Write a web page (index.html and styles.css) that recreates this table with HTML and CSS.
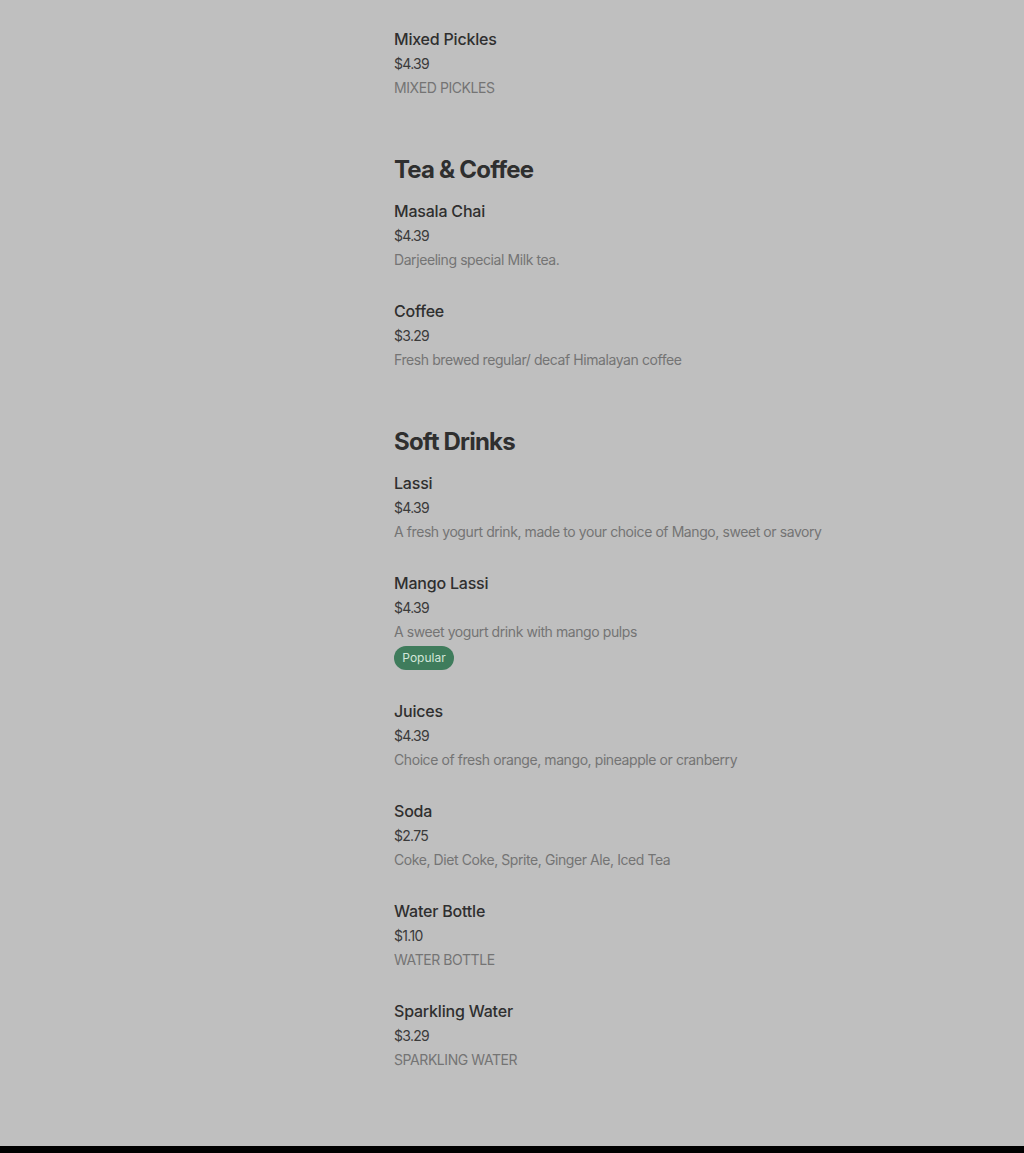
FILE: index.html
```html
<!DOCTYPE html>
<html lang="en">
<head>
<meta charset="utf-8">
<title>Menu</title>
<link rel="stylesheet" href="styles.css">
</head>
<body>
<main class="menu">
  <section class="section first">
    <div class="item">
      <div class="name">Mixed Pickles</div>
      <div class="price">$4.39</div>
      <div class="desc">MIXED PICKLES</div>
    </div>
  </section>

  <section class="section">
    <h2 class="heading">Tea &amp; Coffee</h2>
    <div class="item">
      <div class="name">Masala Chai</div>
      <div class="price">$4.39</div>
      <div class="desc">Darjeeling special Milk tea.</div>
    </div>
    <div class="item">
      <div class="name">Coffee</div>
      <div class="price">$3.29</div>
      <div class="desc">Fresh brewed regular/ decaf Himalayan coffee</div>
    </div>
  </section>

  <section class="section">
    <h2 class="heading">Soft Drinks</h2>
    <div class="item">
      <div class="name">Lassi</div>
      <div class="price">$4.39</div>
      <div class="desc">A fresh yogurt drink, made to your choice of Mango, sweet or savory</div>
    </div>
    <div class="item">
      <div class="name">Mango Lassi</div>
      <div class="price">$4.39</div>
      <div class="desc">A sweet yogurt drink with mango pulps</div>
      <span class="badge">Popular</span>
    </div>
    <div class="item">
      <div class="name">Juices</div>
      <div class="price">$4.39</div>
      <div class="desc">Choice of fresh orange, mango, pineapple or cranberry</div>
    </div>
    <div class="item">
      <div class="name">Soda</div>
      <div class="price">$2.75</div>
      <div class="desc">Coke, Diet Coke, Sprite, Ginger Ale, Iced Tea</div>
    </div>
    <div class="item">
      <div class="name">Water Bottle</div>
      <div class="price">$1.10</div>
      <div class="desc">WATER BOTTLE</div>
    </div>
    <div class="item">
      <div class="name">Sparkling Water</div>
      <div class="price">$3.29</div>
      <div class="desc">SPARKLING WATER</div>
    </div>
  </section>
</main>
<footer class="footer"></footer>
</body>
</html>
```
FILE: styles.css
```css
html, body {
  margin: 0;
  padding: 0;
  background: #bfbfbf;
}
body {
  font-family: Inter, "Noto Sans", sans-serif;
  color: #333;
  min-height: 1153px;
  display: flex;
  flex-direction: column;
}
.menu {
  padding: 27px 0 20px 394px;
  display: flex;
  flex-direction: column;
}
.section {
  display: flex;
  flex-direction: column;
  margin-top: 27px;
}
.section.first {
  margin-top: 0;
}
.heading {
  margin: 0 0 13px;
  font-size: 24px;
  line-height: 32px;
  font-weight: 700;
  letter-spacing: -0.8px;
  color: #2f2f2f;
}
.item {
  display: flex;
  flex-direction: column;
  align-items: flex-start;
  padding-bottom: 27px;
}
.name {
  font-size: 16px;
  line-height: 24px;
  font-weight: 500;
  color: #2f2f2f;
  letter-spacing: -0.2px;
}
.price {
  margin-top: 1px;
  font-size: 14px;
  line-height: 24px;
  color: #3a3a3a;
  letter-spacing: -0.7px;
}
.desc {
  font-size: 14px;
  line-height: 24px;
  color: #747474;
  letter-spacing: -0.42px;
}
.badge {
  margin-top: 2px;
  margin-bottom: 2px;
  height: 24px;
  width: 60px;
  box-sizing: border-box;
  border-radius: 12px;
  background: #3f7c5c;
  color: #d2e6d9;
  font-size: 12px;
  line-height: 24px;
  text-align: center;
}
.footer {
  margin-top: auto;
  height: 7px;
  background: #000;
}
```
